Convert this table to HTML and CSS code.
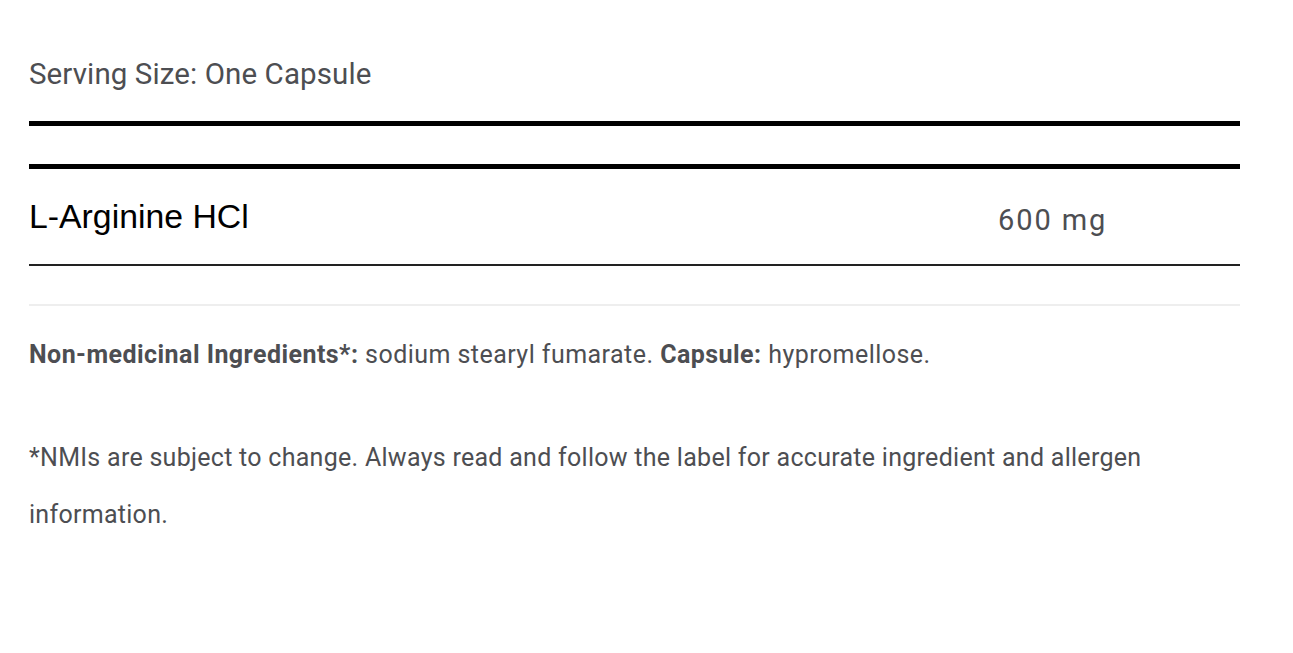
FILE: index.html
```html
<!DOCTYPE html>
<html>
<head>
<meta charset="utf-8">
<link rel="stylesheet" href="styles.css">
</head>
<body>
<div class="facts">
  <p class="serving">Serving Size: One Capsule</p>
  <div class="rule-thick first"></div>
  <div class="rule-thick second"></div>
  <div class="row">
    <span class="name">L-Arginine HCl</span>
    <span class="amount">600 mg</span>
  </div>
  <div class="rule-light"></div>
  <p class="nmi"><strong>Non-medicinal Ingredients*:</strong> sodium stearyl fumarate. <strong>Capsule:</strong> hypromellose.</p>
  <p class="note">*NMIs are subject to change. Always read and follow the label for accurate ingredient and allergen information.</p>
</div>
</body>
</html>
```

FILE: styles.css
```css
html, body {
  margin: 0;
  padding: 0;
  background: #fff;
}
.facts {
  width: 1211px;
  margin-left: 29px;
  font-family: Roboto, "Liberation Sans", sans-serif;
  color: #4d4e52;
}
.serving {
  margin: 0;
  padding-top: 57px;
  font-size: 29.5px;
  letter-spacing: 0.1px;
  line-height: 34px;
}
.rule-thick {
  height: 5px;
  background: #000;
}
.rule-thick.first {
  margin-top: 30px;
}
.rule-thick.second {
  margin-top: 38px;
}
.row {
  display: flex;
  justify-content: space-between;
  align-items: baseline;
  padding-top: 30px;
  padding-bottom: 28px;
  border-bottom: 2px solid #222;
}
.name {
  font-family: "Liberation Sans", Arial, sans-serif;
  font-size: 33.8px;
  line-height: 35px;
  color: #000;
}
.amount {
  font-size: 29px;
  letter-spacing: 1.9px;
  line-height: 35px;
  width: 242px;
  position: relative;
  top: 2px;
  color: #4d4e52;
}
.rule-light {
  margin-top: 38px;
  height: 2px;
  background: #eeeeee;
}
.nmi {
  margin: 0;
  margin-top: 34px;
  font-size: 25px;
  letter-spacing: 0.45px;
  line-height: 30px;
}
.nmi strong {
  font-weight: 700;
}
.note {
  margin: 0;
  margin-top: 59px;
  font-size: 25px;
  letter-spacing: 0.28px;
  line-height: 57px;
}
```
